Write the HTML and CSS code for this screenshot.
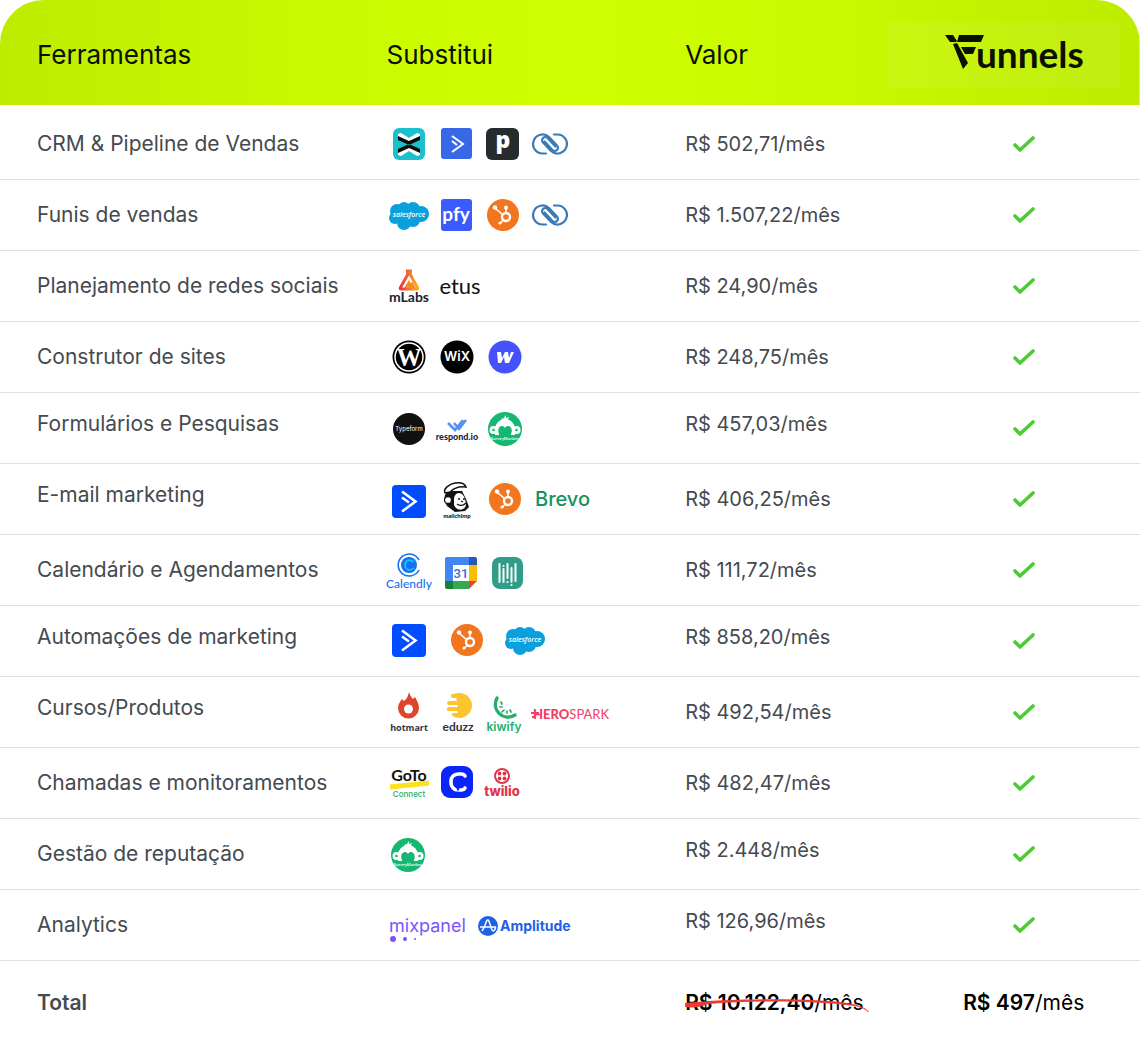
FILE: index.html
```html
<!DOCTYPE html>
<html lang="pt-BR">
<head>
<meta charset="utf-8">
<meta name="viewport" content="width=device-width, initial-scale=1">
<title>Funnels</title>
<link rel="stylesheet" href="styles.css">
</head>
<body>
<svg class="sprite" aria-hidden="true">
  <symbol id="check" viewBox="0 0 24 20"><path d="M3 11l5 5L21 4" fill="none" stroke="#4dcb33" stroke-width="3.600" stroke-linecap="round" stroke-linejoin="round"/></symbol>
  <symbol id="ac" viewBox="0 0 46 48"><rect x="6" y="8" width="34" height="33" rx="4" fill="#004cff"/><path d="M16 14.500l13.500 10-13.500 10M16 20.500l7 5" fill="none" stroke="#fff" stroke-width="2.600"/></symbol>
  <symbol id="hubspot" viewBox="0 0 46 48"><circle cx="23" cy="24" r="16" fill="#f27620"/><g stroke="#fff" fill="none"><circle cx="26" cy="26" r="4" stroke-width="2.400"/><path d="M26 22v-5M23 24l-8-7M23.500 29l-3 3" stroke-width="1.600"/></g><g fill="#fff"><circle cx="26" cy="16.500" r="2"/><circle cx="15" cy="16.500" r="2.200"/><circle cx="20" cy="32" r="1.600"/></g></symbol>
  <symbol id="rings" viewBox="0 0 46 48"><g fill="none" stroke="#3a78b8" stroke-width="2.200" stroke-linecap="round"><path id="ring" d="M19 33.500H16A9.500 9.500 0 1 1 22 17l8 8.500a3 3 0 0 1-4.500 4.500l-8-8.500"/><path d="M19 33.500H16A9.500 9.500 0 1 1 22 17l8 8.500a3 3 0 0 1-4.500 4.500l-8-8.500" transform="rotate(180 23 24)"/></g></symbol>
  <symbol id="salesforce" viewBox="0 0 46 48"><g fill="#0a9fdd"><circle cx="11" cy="20" r="7"/><circle cx="18" cy="17" r="6"/><circle cx="27" cy="18" r="7"/><circle cx="35" cy="23" r="8"/><circle cx="9" cy="27" r="6"/><circle cx="18" cy="32" r="7"/><circle cx="27" cy="29" r="7"/><rect x="10" y="18" width="24" height="12"/></g><text x="23" y="26" text-anchor="middle" class="t-sf">salesforce</text></symbol>
  <symbol id="monkey" viewBox="0 0 46 48"><circle cx="23" cy="24" r="17" fill="#14b871"/><g fill="#fff"><circle cx="11.500" cy="25" r="4"/><circle cx="34.500" cy="25" r="4"/><path d="M13 30v-6a10 10 0 0 1 20 0v6z"/><path d="M20 15c-1-1 0-2 1-2l1 1c0-2 1-3 2-4v3l3-1-2 4z"/></g><path d="M17 31v-2c-3-6 3-11 6-6 3-5 9 0 6 6v2z" fill="#14b871"/><circle cx="11.500" cy="25" r="1.300" fill="#14b871"/><circle cx="34.500" cy="25" r="1.300" fill="#14b871"/><text x="23" y="35" text-anchor="middle" class="t-monkey">SurveyMonkey</text></symbol>
</svg>

<table class="compare">
  <thead>
    <tr>
      <th scope="col">Ferramentas</th>
      <th scope="col">Substitui</th>
      <th scope="col">Valor</th>
      <th scope="col"><div class="brand">
        <svg class="brand-logo" viewBox="0 0 142 42" role="img" aria-label="Funnels"><path d="M1 3h8l4 6-1 1H6zM15 3h25l-3 7H13zM9 12l4-1 11 20-5 6zM17 15h15l-3 7h-8z" fill="#0b0f00"/><text x="32" y="36" class="t-brand">unnels</text></svg>
      </div></th>
    </tr>
  </thead>
  <tbody>
    <tr class="first">
      <th scope="row">CRM &amp; Pipeline de Vendas</th>
      <td><div class="logos logos-tight">
        <svg class="logo" viewBox="0 0 46 48"><rect x="7" y="8" width="32" height="32" rx="6" fill="#1dbfcb"/><path d="M12 14l3-1 8 5 8-5 3 1v3l-11 5-11-5zM12 35l3 1 8-5 8 5 3-1v-3l-11-5-11 5z" fill="#fff"/><path d="M12 16l11 5 11-5v4l-11 5-11-5zM12 33l11-5 11 5v-4l-11-5-11 5z" fill="#0b0b0b"/></svg>
        <svg class="logo" viewBox="0 0 46 48"><rect x="8" y="8" width="31" height="31" rx="3" fill="#3867e8"/><path d="M19 16l11 8-11 8M19 21l5 4" fill="none" stroke="#fff" stroke-width="2"/></svg>
        <svg class="logo" viewBox="0 0 46 48"><rect x="6" y="8" width="33" height="32" rx="6" fill="#262b2e"/><text x="23" y="28" text-anchor="middle" class="t-pipe">p</text></svg>
        <svg class="logo"><use href="#rings"/></svg>
      </div></td>
      <td>R$ 502,71/mês</td>
      <td><svg class="tick" role="img" aria-label="Incluso"><use href="#check"/></svg></td>
    </tr>
    <tr>
      <th scope="row">Funis de vendas</th>
      <td><div class="logos logos-tight">
        <svg class="logo"><use href="#salesforce"/></svg>
        <svg class="logo" viewBox="0 0 46 48"><rect x="8" y="8" width="31" height="32" rx="3" fill="#3b5bff"/><text x="23" y="30" text-anchor="middle" class="t-pfy">pfy</text></svg>
        <svg class="logo"><use href="#hubspot"/></svg>
        <svg class="logo"><use href="#rings"/></svg>
      </div></td>
      <td>R$ 1.507,22/mês</td>
      <td><svg class="tick" role="img" aria-label="Incluso"><use href="#check"/></svg></td>
    </tr>
    <tr>
      <th scope="row">Planejamento de redes sociais</th>
      <td><div class="logos">
        <svg class="logo" viewBox="0 0 46 48"><defs><linearGradient id="flask"><stop offset="0" stop-color="#e5344a"/><stop offset="1" stop-color="#fbb116"/></linearGradient></defs><path d="M20 9h6M21.500 9v4L14.500 25.500q-1 1.500 1 1.500h15q2 0 1-1.500L24.500 13V9" fill="none" stroke="url(#flask)" stroke-width="3"/><path d="M18 26l5-8 1.500 3 2-1 3 6z" fill="#f58a1f"/><text x="23" y="40" text-anchor="middle" class="t-mlabs">mLabs</text></svg>
        <svg class="logo" viewBox="0 0 46 48"><text x="26" y="32" text-anchor="middle" class="t-etus">etus</text></svg>
      </div></td>
      <td>R$ 24,90/mês</td>
      <td><svg class="tick" role="img" aria-label="Incluso"><use href="#check"/></svg></td>
    </tr>
    <tr>
      <th scope="row">Construtor de sites</th>
      <td><div class="logos">
        <svg class="logo" viewBox="0 0 46 48"><circle cx="23" cy="24" r="16.500" fill="#000"/><circle cx="23" cy="24" r="14" fill="none" stroke="#fff" stroke-width="1.500"/><text x="23" y="33" text-anchor="middle" class="t-wp">W</text></svg>
        <svg class="logo" viewBox="0 0 46 48"><circle cx="23" cy="24" r="16.500" fill="#000"/><text x="23" y="28" text-anchor="middle" class="t-wix">WiX</text></svg>
        <svg class="logo" viewBox="0 0 46 48"><circle cx="23" cy="24" r="16.500" fill="#4552fb"/><path d="M15 19h4l1 6 3-6h3l1 6 2-6h3l-5 11h-4l-1-6-3 6h-3z" fill="#fff"/></svg>
      </div></td>
      <td>R$ 248,75/mês</td>
      <td><svg class="tick" role="img" aria-label="Incluso"><use href="#check"/></svg></td>
    </tr>
    <tr>
      <th scope="row" class="lift">Formulários e Pesquisas</th>
      <td><div class="logos">
        <svg class="logo" viewBox="0 0 46 48"><circle cx="23" cy="25" r="16" fill="#111"/><text x="23" y="27" text-anchor="middle" class="t-typeform">Typeform</text></svg>
        <svg class="logo" viewBox="0 0 46 48"><path d="M14 19l7 7 8-10M20 19l5 6 7-9" fill="none" stroke="#5b8ff0" stroke-width="2.600"/><text x="23" y="36" text-anchor="middle" class="t-respond">respond.io</text></svg>
        <svg class="logo"><use href="#monkey" y="1"/></svg>
      </div></td>
      <td class="lift">R$ 457,03/mês</td>
      <td><svg class="tick" role="img" aria-label="Incluso"><use href="#check"/></svg></td>
    </tr>
    <tr>
      <th scope="row" class="lift">E-mail marketing</th>
      <td><div class="logos">
        <svg class="logo"><use href="#ac" y="2"/></svg>
        <svg class="logo" viewBox="0 0 46 48"><path d="M13 31l-3-6 1-5 3-4 14 0 4 8 3 8-4 4-10 1z" fill="#111"/><path d="M20 24c0-3 2-6 5-6s5 3 6 6c1 4 2 8-2 10s-8-1-9-4z" fill="#fff"/><path d="M11 18c-2-4 4-9 10-10s10 1 11 4c-6-1-12 1-16 5z" fill="#fff" stroke="#111" stroke-width="1.500"/><circle cx="14" cy="25" r="3.500" fill="#fff" stroke="#111" stroke-width="1.300"/><path d="M24 24h2M29 24h2M23 29c3 2 6 2 9-1M27 26l2 1" stroke="#111" stroke-width="1.300" fill="none"/><text x="23" y="43" text-anchor="middle" class="t-chimp">mailchimp</text></svg>
        <svg class="logo"><use href="#hubspot"/></svg>
        <svg class="logo-word" viewBox="0 0 82 48"><text x="5" y="31" class="t-brevo">Brevo</text></svg>
      </div></td>
      <td>R$ 406,25/mês</td>
      <td><svg class="tick" role="img" aria-label="Incluso"><use href="#check"/></svg></td>
    </tr>
    <tr>
      <th scope="row">Calendário e Agendamentos</th>
      <td><div class="logos">
        <svg class="logo" viewBox="0 0 46 48"><g fill="none" stroke="#1272f3"><path d="M33 14a11 11 0 1 0 0 10" stroke-width="1.600"/><circle cx="23" cy="19" r="8" fill="#1272f3" stroke="none"/><path d="M28 16c-5-4-9-1-9 3s4 7 9 3" stroke="#19c3ef" stroke-width="1.600"/></g><text x="23" y="42" text-anchor="middle" class="t-calendly">Calendly</text></svg>
        <svg class="logo" viewBox="0 0 46 48"><path d="M13 11h22v8H19v16h-8V13q0-2 2-2z" fill="#4285f4"/><path d="M35 11h6q2 0 2 2v6h-8z" fill="#2559bf"/><path d="M35 19h8v16h-8z" fill="#fbbc04"/><path d="M19 35h16v8H19z" fill="#34a853"/><path d="M11 35h8v8h-6q-2 0-2-2z" fill="#188038"/><path d="M35 35h8l-8 8z" fill="#ea4335"/><path d="M19 19h16v16H19z" fill="#fff"/><text x="27" y="32" text-anchor="middle" class="t-gcal">31</text></svg>
        <svg class="logo" viewBox="0 0 46 48"><rect x="10" y="11" width="31" height="32" rx="8" fill="#2f9d88"/><path d="M17.500 18v18M21.500 23v13M25.500 18v14M29.500 22v14M33.500 18v17" stroke="#fff" stroke-width="2" stroke-linecap="round"/><path d="M21.500 20v0M25.500 36v0M29.500 39v0" stroke="#fff" stroke-width="2" stroke-linecap="round"/></svg>
      </div></td>
      <td>R$ 111,72/mês</td>
      <td><svg class="tick" role="img" aria-label="Incluso"><use href="#check"/></svg></td>
    </tr>
    <tr>
      <th scope="row" class="lift">Automações de marketing</th>
      <td><div class="logos logos-wide">
        <svg class="logo"><use href="#ac" y="-1"/></svg>
        <svg class="logo"><use href="#hubspot" y="-1"/></svg>
        <svg class="logo"><use href="#salesforce" y="-1"/></svg>
      </div></td>
      <td class="lift">R$ 858,20/mês</td>
      <td><svg class="tick" role="img" aria-label="Incluso"><use href="#check"/></svg></td>
    </tr>
    <tr>
      <th scope="row" class="lift">Cursos/Produtos</th>
      <td><div class="logos">
        <svg class="logo" viewBox="0 0 46 48"><path d="M23 4c1 3 2 5 4 7l2-2c2 4 4 7 4 11a10 10 0 0 1-21 0c0-4 2-6 4-9l2 2c3-2 4-5 5-9z" fill="#e0452b"/><circle cx="22.500" cy="21" r="4.500" fill="#fff"/><text x="23" y="43" text-anchor="middle" class="t-hotmart">hotmart</text></svg>
        <svg class="logo" viewBox="0 0 46 48"><path d="M19 6q3-1 6.500-1a12.500 12.500 0 0 1 0 25q-4 0-7-2q-2-2 1-3h4v-2h-10q-2-2 1-4h9v-2h-9q-3-2 0-4h8v-3h-4q-3-2-.5-4z" fill="#fcc52f"/><text x="24" y="43" text-anchor="middle" class="t-eduzz">eduzz</text></svg>
        <svg class="logo" viewBox="0 0 46 48"><path d="M15 10c-6 12 6 24 18 17" fill="none" stroke="#27ae68" stroke-width="3.400" stroke-linecap="round"/><path d="M19 14l1 2M18 19h2M20 24l2-2M25 25v-2M29 24l-1-2" stroke="#27ae68" stroke-width="1.700" stroke-linecap="round"/><text x="22" y="43" text-anchor="middle" class="t-kiwify">kiwify</text></svg>
        <svg class="logo-word" viewBox="0 0 82 48"><path d="M1 25h8M2 29h3" stroke="#f23d68" stroke-width="2"/><text x="3" y="31" class="t-hero">HERO<tspan class="t-spark">SPARK</tspan></text></svg>
      </div></td>
      <td>R$ 492,54/mês</td>
      <td><svg class="tick" role="img" aria-label="Incluso"><use href="#check"/></svg></td>
    </tr>
    <tr>
      <th scope="row">Chamadas e monitoramentos</th>
      <td><div class="logos">
        <svg class="logo" viewBox="0 0 46 48"><path d="M4 28l39-4" stroke="#fbe21a" stroke-width="5"/><text x="23" y="22" text-anchor="middle" class="t-goto">GoTo</text><text x="23" y="38" text-anchor="middle" class="t-connect">Connect</text></svg>
        <svg class="logo" viewBox="0 0 46 48"><rect x="7" y="7" width="32" height="32" rx="9" fill="#0b24fb"/><path d="M31 17q-1-2-4-2h-3a7 7 0 0 0-7 7v2a7 7 0 0 0 7 7h3q3 0 4-2" fill="none" stroke="#fff" stroke-width="3.600" stroke-linecap="round"/><path d="M22 28.500h4l-2 4z" fill="#0b24fb"/></svg>
        <svg class="logo" viewBox="0 0 46 48"><circle cx="20" cy="17" r="7" fill="none" stroke="#e0364d" stroke-width="2"/><g fill="#e0364d"><circle cx="17.500" cy="14.500" r="1.900"/><circle cx="22.500" cy="14.500" r="1.900"/><circle cx="17.500" cy="19.500" r="1.900"/><circle cx="22.500" cy="19.500" r="1.900"/></g><text x="20" y="37" text-anchor="middle" class="t-twilio">twilio</text></svg>
      </div></td>
      <td>R$ 482,47/mês</td>
      <td><svg class="tick" role="img" aria-label="Incluso"><use href="#check"/></svg></td>
    </tr>
    <tr>
      <th scope="row">Gestão de reputação</th>
      <td><div class="logos">
        <svg class="logo"><use href="#monkey" x="-1" y="1"/></svg>
      </div></td>
      <td class="lift">R$ 2.448/mês</td>
      <td><svg class="tick" role="img" aria-label="Incluso"><use href="#check"/></svg></td>
    </tr>
    <tr>
      <th scope="row">Analytics</th>
      <td><div class="logos">
        <svg class="logo-word" viewBox="0 0 82 48"><text x="3" y="31" class="t-mix">mixpanel</text><g fill="#7856ff"><circle cx="7" cy="38" r="3"/><circle cx="19" cy="38" r="2"/><circle cx="29" cy="38" r="1"/></g></svg>
        <svg class="logo-long" viewBox="0 0 110 48"><circle cx="18" cy="25" r="10" fill="#1e61e8"/><path d="M10 26h16M12 30c4-5 4-12 6-11s3 11 5 11 2-3 3-4" fill="none" stroke="#fff" stroke-width="1.500"/><text x="30" y="30" class="t-amp">Amplitude</text></svg>
      </div></td>
      <td class="lift">R$ 126,96/mês</td>
      <td><svg class="tick" role="img" aria-label="Incluso"><use href="#check"/></svg></td>
    </tr>
  </tbody>
  <tfoot>
    <tr>
      <th scope="row">Total</th>
      <td></td>
      <td><span class="old-price"><strong>R$ 10.122,40</strong>/mês<svg class="swoosh" viewBox="0 0 186 18" aria-hidden="true"><path d="M0 8c50-5 130-5 162 0 12 2 18 4 22 9l-1 0c-5-5-12-6-22-7-30-4-90-5-138-1-6 3-15 4-23 3z" fill="#ee3a36"/></svg></span></td>
      <td><strong>R$ 497</strong>/mês</td>
    </tr>
  </tfoot>
</table>
</body>
</html>
```
FILE: styles.css
```css
body {
  margin: 0;
  background: #fff;
  color: #454a50;
  font-family: Inter, "Liberation Sans", sans-serif;
  font-size: 21px;
  line-height: 28px;
}

.sprite { display: none; }

.compare {
  width: 100%;
  border-collapse: separate;
  border-spacing: 0;
  table-layout: fixed;
  border-radius: 44px 44px 0 0;
  overflow: hidden;
}

.compare th,
.compare td {
  box-sizing: border-box;
  padding: 0;
  text-align: left;
  font-weight: 400;
  white-space: nowrap;
}

.compare th:first-child {
  width: 33.9%;
  padding-left: 37px;
}

.compare th:nth-child(2) { width: 26.2%; }
.compare th:nth-child(3) { width: 19.5%; }
.compare th:nth-child(4) { width: 20.4%; }

/* header */
.compare thead {
  color: #0b0f00;
  font-size: 26px;
}

.compare thead tr {
  height: 105px;
  background: linear-gradient(90deg, #bdec00, #cbfa00 30%, #cfff00 50%, #cbfa00 70%, #bdec00);
}

.compare thead th { padding-top: 4px; }

.brand {
  display: flex;
  align-items: center;
  justify-content: center;
  height: 66px;
  margin: 0 20px 0 -20px;
  padding: 0 0 4px 22px;
  box-sizing: border-box;
  background: rgb(255 255 255 / 6%);
}

.brand-logo {
  width: 142px;
  height: 42px;
  overflow: visible;
}

/* rows */
.compare tbody tr { height: 71px; }
.compare tbody tr.first { height: 75px; }

.compare tbody th,
.compare tbody td {
  border-bottom: 1px solid #dedfe1;
}

.compare tbody .first th,
.compare tbody .first td { padding-top: 4px; }

.compare tbody .lift { padding-bottom: 8px; }

.compare tbody td:nth-child(3) { font-size: 20px; }

.compare td:nth-child(4) { text-align: center; }

.logos {
  display: flex;
  gap: 2px;
}

.logos-tight { gap: 1px; }
.logos-wide { gap: 12px; }

.logo, .logo-word, .logo-long {
  height: 48px;
  overflow: visible;
}

.logo { width: 46px; }
.logo-word { width: 82px; }
.logo-long { width: 110px; }

.tick {
  display: block;
  width: 24px;
  height: 20px;
  margin: 0 auto;
}

/* total */
.compare tfoot tr { height: 84px; }
.compare tfoot th { font-weight: 600; }
.compare tfoot td { color: #000; }
.compare tfoot strong { font-weight: 600; }

.old-price {
  position: relative;
  display: inline-block;
}

.swoosh {
  position: absolute;
  left: 0;
  top: 6px;
  width: 186px;
  height: 18px;
}

/* logo lettering */
.t-brand { font: 700 37px Lato, sans-serif; fill: #0b0f00; }
.t-sf { font: italic 600 7px "Open Sans", sans-serif; fill: #fff; }
.t-monkey { font: 600 4px "Open Sans", sans-serif; fill: #fff; }
.t-pipe { font: 800 23px "Open Sans", sans-serif; fill: #fff; }
.t-pfy { font: 700 19px Lato, sans-serif; fill: #fff; }
.t-mlabs { font: 700 14px Lato, sans-serif; fill: #20242e; }
.t-etus { font: 400 22px Lato, sans-serif; fill: #111; }
.t-wp { font: 700 25px "Liberation Serif", serif; fill: #fff; }
.t-wix { font: 600 13px Inter, sans-serif; fill: #fff; }
.t-typeform { font: 400 6px Inter, sans-serif; fill: #fff; }
.t-respond { font: 900 9px Lato, sans-serif; fill: #22273a; }
.t-chimp { font: 900 6px Lato, sans-serif; fill: #111; }
.t-brevo { font: 500 20px Inter, sans-serif; fill: #14935f; }
.t-calendly { font: 500 12px Lato, sans-serif; fill: #1272f3; }
.t-gcal { font: 500 13px Roboto, sans-serif; fill: #2f6fdc; }
.t-hotmart { font: 700 9px "Open Sans", sans-serif; fill: #263746; }
.t-eduzz { font: 700 12px Lato, sans-serif; fill: #2c3442; }
.t-kiwify { font: 600 12px Inter, sans-serif; fill: #27ae68; }
.t-hero { font: 900 13px Lato, sans-serif; fill: #f23d68; }
.t-spark { font-weight: 400; }
.t-goto { font: 700 16px Lato, sans-serif; fill: #111; }
.t-connect { font: 500 8px Inter, sans-serif; fill: #1aae70; }
.t-twilio { font: 800 13px Inter, sans-serif; fill: #e0364d; }
.t-mix { font: 400 18px Inter, sans-serif; fill: #7856ff; }
.t-amp { font: 700 14px Inter, sans-serif; fill: #1e61e8; }
```
